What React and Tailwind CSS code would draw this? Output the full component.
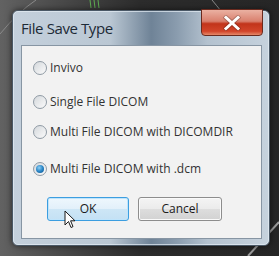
import React from "react";

function Radio({ checked }) {
  return (
    <div className="relative w-[14px] h-[14px] shrink-0 rounded-full border border-[#8f9aa4] bg-gradient-to-br from-[#d4d8dc] to-[#fbfbfb] flex items-center justify-center">
      {checked && (
        <div className="w-[8px] h-[8px] rounded-full bg-[radial-gradient(circle_at_40%_35%,#8fd0f6_0%,#2a86c6_50%,#0b4f8c_100%)]" />
      )}
    </div>
  );
}

function Row({ label, checked, className }) {
  return (
    <div className={"flex items-center gap-[3px] " + className}>
      <Radio checked={checked} />
      <span className="text-[12px] leading-[14px] text-[#333333]">{label}</span>
    </div>
  );
}

export default function App() {
  return (
    <div
      className="relative w-[279px] h-[256px] overflow-hidden bg-gradient-to-r from-[#626262] via-[#2c2c2c] to-[#262626] pl-[12px] pt-[10px]"
      style={{ fontFamily: '"Open Sans", "Noto Sans", sans-serif' }}
    >
      <svg className="absolute inset-0" width="279" height="256" viewBox="0 0 279 256">
        <path d="M0 34 Q18 12 36 0" stroke="#8a8a8a" strokeWidth="1" fill="none" />
        <path d="M212 0 Q217 6 221 11" stroke="#8a8a8a" strokeWidth="1" fill="none" />
        <path d="M90 0 L91 8 M94 0 L95 8 M98 0 L99 8" stroke="#5fae52" strokeWidth="1" fill="none" />
        <path d="M248 256 L279 222" stroke="#9a9a9a" strokeWidth="2" fill="none" />
      </svg>
      <div className="relative w-[258px] h-[236px] rounded-[6px] border border-[#4a5866] bg-[linear-gradient(90deg,#c4d0dc_0%,#bac7d3_38%,#6f8397_54%,#8a9cae_64%,#b4c2cf_76%,#c6d2dd_100%)] flex flex-col shadow-[0_0_6px_rgba(0,0,0,0.6)]">
        <div className="absolute inset-0 rounded-[5px] border border-[#e4ecf3] opacity-70 pointer-events-none" />
        <div className="h-[34px] flex items-center pl-[8px] relative">
          <span className="text-[15px] text-[#1d2a36] tracking-[-0.4px]">File Save Type</span>
          <div className="absolute right-[6px] top-[-2px] w-[62px] h-[27px] rounded-b-[4px] border border-[#6a2a1e] bg-[linear-gradient(180deg,#eab1a2_0%,#d9806e_45%,#c2341b_55%,#d2452a_85%,#e58a6a_100%)] flex items-center justify-center">
            <svg width="22" height="16" viewBox="0 0 22 16">
              <path d="M5 2.5 L17 13.5 M17 2.5 L5 13.5" stroke="#3a1a14" strokeWidth="4.6" strokeLinecap="square" opacity="0.3" />
              <path d="M5 2.5 L17 13.5 M17 2.5 L5 13.5" stroke="#ffffff" strokeWidth="3" strokeLinecap="square" />
            </svg>
          </div>
        </div>
        <div className="ml-[8px] w-[241px] h-[194px] border border-[#8795a3] bg-[#f2f2f2] flex flex-col pl-[11px]">
          <Row label="Invivo" className="mt-[15px]" />
          <Row label="Single File DICOM" className="mt-[20px]" />
          <Row label="Multi File DICOM with DICOMDIR" className="mt-[16px]" />
          <Row label="Multi File DICOM with .dcm" checked className="mt-[23px]" />
          <div className="flex gap-[9px] mt-[21px] ml-[14px]">
            <div className="relative w-[82px] h-[24px] rounded-[3px] border border-[#3c9ee0] bg-[linear-gradient(180deg,#eef7fd_0%,#e2f0fa_50%,#cde6f6_51%,#c4e1f4_100%)] shadow-[inset_0_0_0_1px_#bfe4fb] flex items-center justify-center text-[12px] text-[#1b1b1b]">
              OK
              <svg className="absolute left-[16px] top-[12px]" width="12" height="20" viewBox="0 0 12 20">
                <path d="M1 1 L1 15 L4.5 11.5 L7 17.5 L9 16.6 L6.6 10.8 L11 10.8 Z" fill="#ffffff" stroke="#1a1a1a" strokeWidth="1" strokeLinejoin="round" />
              </svg>
            </div>
            <div className="w-[84px] h-[24px] rounded-[3px] border border-[#8d8d8d] bg-[linear-gradient(180deg,#f4f4f4_0%,#ebebeb_50%,#dddddd_51%,#d2d2d2_100%)] shadow-[inset_0_0_0_1px_#fafafa] flex items-center justify-center text-[12px] text-[#1b1b1b]">
              Cancel
            </div>
          </div>
        </div>
      </div>
    </div>
  );
}
